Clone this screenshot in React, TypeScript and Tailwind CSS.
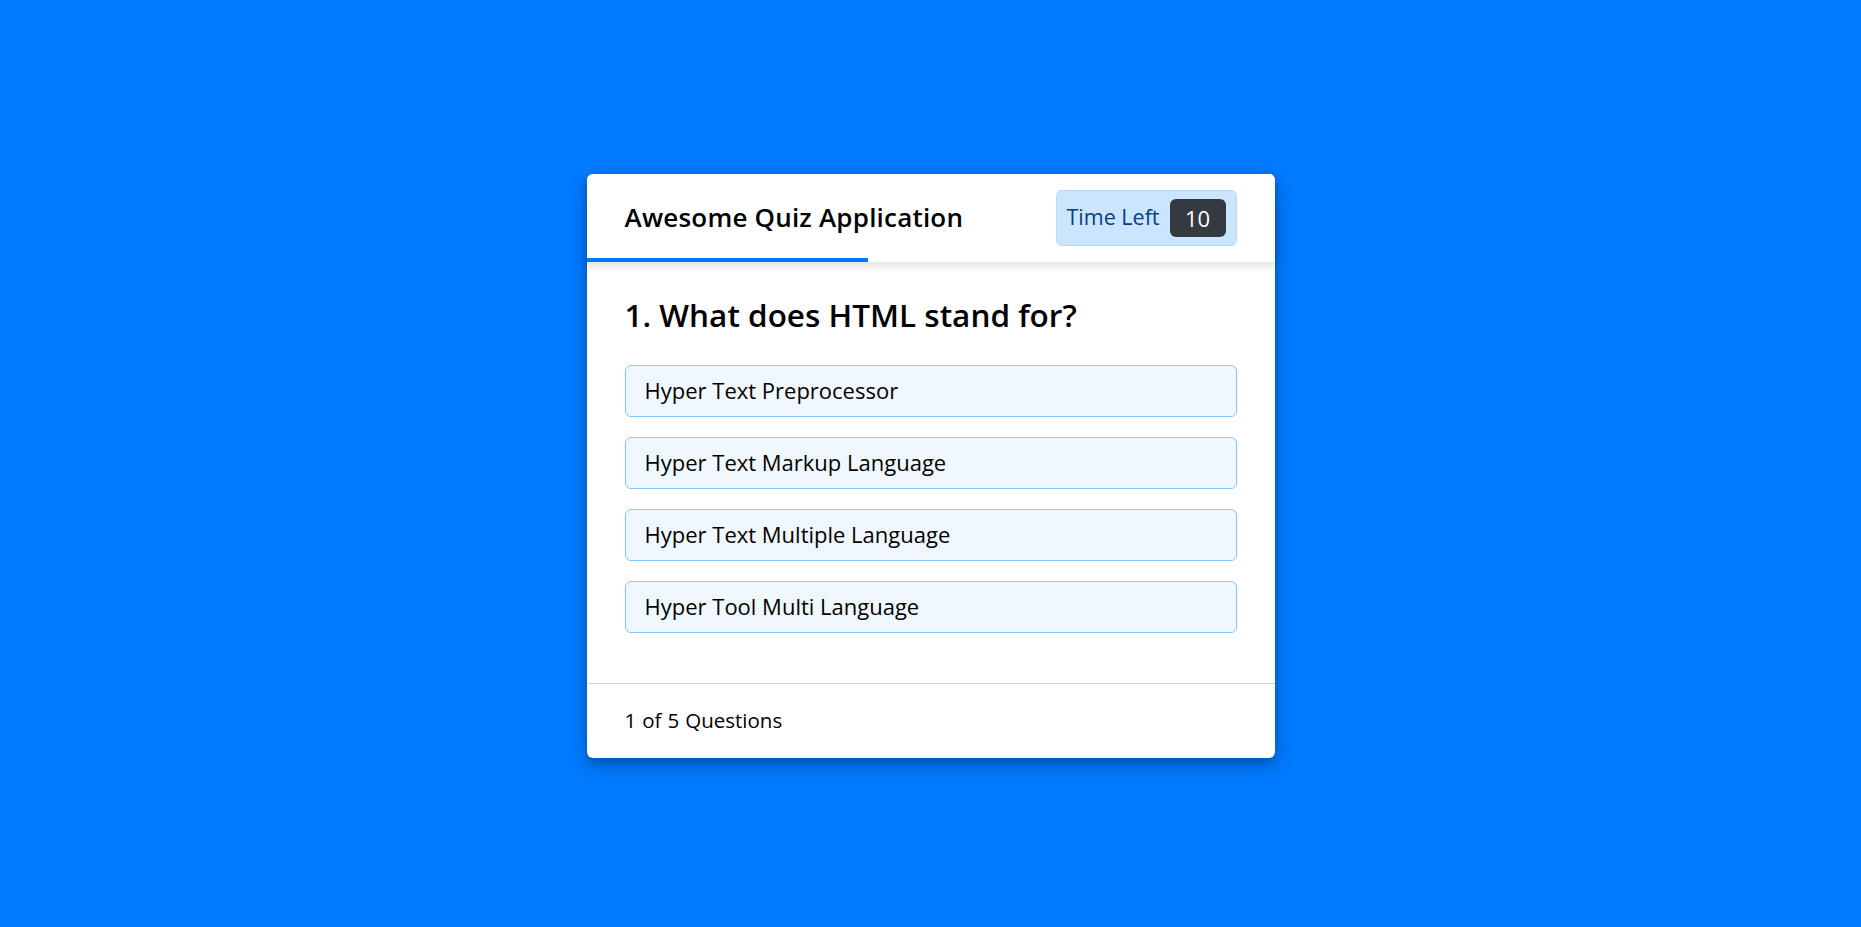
import React from 'react';

const options = [
  'Hyper Text Preprocessor',
  'Hyper Text Markup Language',
  'Hyper Text Multiple Language',
  'Hyper Tool Multi Language',
];

export default function App() {
  return (
    <div
      className="flex min-h-[927px] w-full items-center justify-center bg-[#007bff] pt-[4px] text-black"
      style={{ fontFamily: '"Open Sans", "Liberation Sans", sans-serif' }}
    >
      <div className="w-[688px] rounded-[6px] bg-white shadow-[0_5px_10px_0_rgba(0,0,0,0.2),0_8px_25px_0_rgba(0,0,0,0.19)]">
        <header className="relative z-10 flex h-[88px] items-center justify-between rounded-t-[6px] bg-white px-[38px] shadow-[0_4px_6px_1px_rgba(0,0,0,0.1)]">
          <div className="text-[26px] font-semibold tracking-[0.2px]">Awesome Quiz Application</div>
          <div className="flex h-[56px] w-[181px] items-center justify-between rounded-[6px] border border-[#b8daff] bg-[#cce5ff] px-[10px] text-[#004085]">
            <span className="text-[21.5px]">Time Left</span>
            <span className="h-[38px] w-[56px] rounded-[6px] bg-[#343a40] text-center text-[22px] font-medium leading-[38px] text-white">
              10
            </span>
          </div>
          <div className="absolute bottom-0 left-0 h-[4px] w-[281px] bg-[#007bff]" />
        </header>
        <section className="px-[38px] pt-[31px] pb-[50px]">
          <div className="text-[31.5px] font-semibold leading-[44px]">1. What does HTML stand for?</div>
          <div className="mt-[28px] flex flex-col gap-[20px]">
            {options.map((o) => (
              <div
                key={o}
                className="flex h-[52px] items-center rounded-[6px] border border-[#84c5fe] bg-[#f0f8ff] px-[19px] text-[22px]"
              >
                {o}
              </div>
            ))}
          </div>
        </section>
        <footer className="flex h-[75px] items-center border-t border-[#d3d3d3] px-[38px] text-[20.5px]">
          <span className="flex">
            <span className="pr-[6px] font-medium">1</span>
            <span>of</span>
            <span className="px-[6px] font-medium">5</span>
            <span>Questions</span>
          </span>
        </footer>
      </div>
    </div>
  );
}
